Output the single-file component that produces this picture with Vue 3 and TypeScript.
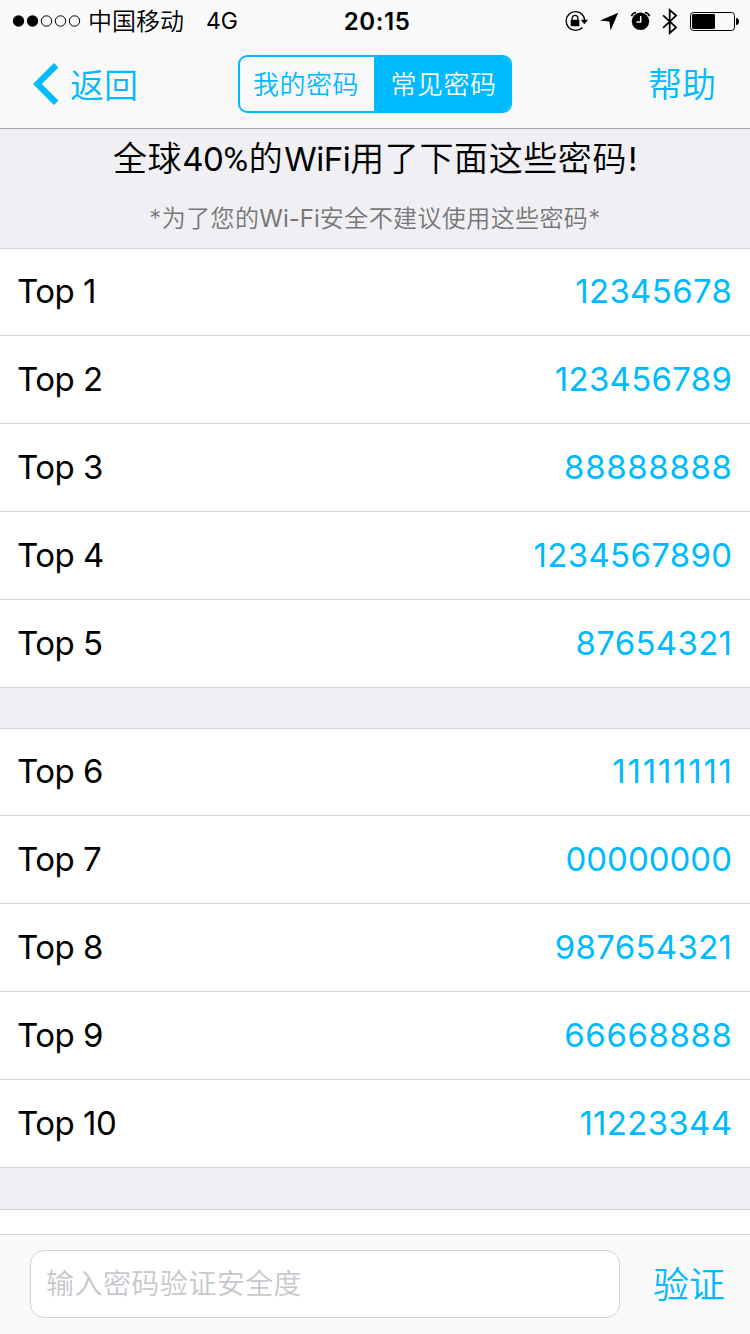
<script setup lang="ts">
import { ref } from 'vue'

interface Entry {
  rank: string
  password: string
  tracking: number
}

const groups: Entry[][] = [
  [
    { rank: 'Top 1', password: '12345678', tracking: 0.35 },
    { rank: 'Top 2', password: '123456789', tracking: 0.3 },
    { rank: 'Top 3', password: '88888888', tracking: 0.65 },
    { rank: 'Top 4', password: '1234567890', tracking: 0.3 },
    { rank: 'Top 5', password: '87654321', tracking: 0.3 },
  ],
  [
    { rank: 'Top 6', password: '11111111', tracking: 1.75 },
    { rank: 'Top 7', password: '00000000', tracking: 0 },
    { rank: 'Top 8', password: '987654321', tracking: 0.3 },
    { rank: 'Top 9', password: '66668888', tracking: 0.6 },
    { rank: 'Top 10', password: '11223344', tracking: 0.3 },
  ],
]

const tabs = ['我的密码', '常见密码']
const activeTab = ref(1)
const candidate = ref('')
</script>

<template>
  <div class="screen">
    <header class="top">
      <div class="status">
        <div class="status-left">
          <svg class="signal" width="70" height="14" viewBox="0 0 70 14">
            <circle cx="6.5" cy="7" r="5.7" />
            <circle cx="20.5" cy="7" r="5.7" />
            <g fill="none" stroke="#000" stroke-width="1">
              <circle cx="34.5" cy="7" r="5.2" />
              <circle cx="48.5" cy="7" r="5.2" />
              <circle cx="62.5" cy="7" r="5.2" />
            </g>
          </svg>
          <span class="carrier">中国移动</span>
          <span class="network">4G</span>
        </div>
        <span class="time">20:15</span>
        <svg class="indicators" width="180" height="32" viewBox="560 4 180 32">
          <path d="M582.4 13.6A9.4 9.4 0 1 0 582.4 26.4M582.2 13.4Q584.4 15.7 584.7 19" fill="none" stroke="#000" stroke-width="1.4" />
          <path d="M580.8 18.8h7.2l-3.6 4.4z" />
          <path d="M572.1 19v-1.7a2.9 2.9 0 0 1 5.8 0V19" fill="none" stroke="#000" stroke-width="1.3" />
          <rect x="570.7" y="18.8" width="8.6" height="6.4" rx=".6" />
          <path d="M618.2 11.8L610.6 29.6L609.4 20.6L600 19.6Z" />
          <circle cx="640.5" cy="20.3" r="8.7" />
          <path d="M640.7 15v5.9h-4.2" fill="none" stroke="#f9f9f9" stroke-width="1.5" />
          <path d="M631.4 15.3q.9-3.1 4.6-3.8M645 11.5q3.7.7 4.6 3.8" fill="none" stroke="#000" stroke-width="1.7" />
          <path d="M663.1 14.3L676.1 26.4L669.7 32V9L676.1 14.6L663.1 26.9" fill="none" stroke="#000" stroke-width="1.8" />
          <rect x="690.5" y="11.5" width="44" height="18" rx="3" fill="none" stroke="#000" />
          <rect x="692" y="13" width="23" height="15" rx="1.4" />
          <path d="M736 17q3 .3 3 3.5t-3 3.5z" />
        </svg>
      </div>
      <nav class="nav">
        <a class="back">
          <svg width="26" height="42" viewBox="0 0 26 42">
            <path d="M0 21L21 0L25.4 4.4L8.8 21L25.4 37.6L21 42Z" fill="#00baff" />
          </svg>
          <span>返回</span>
        </a>
        <div class="segment">
          <button
            v-for="(tab, i) in tabs"
            :key="tab"
            type="button"
            :class="{ active: i === activeTab }"
            @click="activeTab = i"
          >
            {{ tab }}
          </button>
        </div>
        <a class="help">帮助</a>
      </nav>
    </header>

    <main class="content">
      <section class="intro">
        <h1>全球<span class="latin">40<span class="percent">%</span></span>的<span class="latin wifi">WiFi</span>用了下面这些密码<span class="latin mark">!</span></h1>
        <p>*为了您的<span class="latin">Wi-Fi</span>安全不建议使用这些密码*</p>
      </section>
      <ul v-for="(group, g) in groups" :key="g" class="group">
        <li v-for="entry in group" :key="entry.rank">
          <span class="rank">{{ entry.rank }}</span>
          <span class="password" :style="{ '--tracking': entry.tracking + 'px' }">{{ entry.password }}</span>
        </li>
      </ul>
      <div class="next-group"></div>
    </main>

    <footer class="verify">
      <input v-model="candidate" type="text" placeholder="输入密码验证安全度" />
      <a class="submit">验证</a>
    </footer>
  </div>
</template>

<style>
body {
  margin: 0;
}
</style>

<style scoped>
.screen {
  display: flex;
  flex-direction: column;
  width: 750px;
  height: 1334px;
  overflow: hidden;
  background: #efeff4;
  color: #000;
  font-family: Inter, 'Noto Sans CJK SC', sans-serif;
}

.top {
  box-sizing: border-box;
  height: 129px;
  flex: none;
  background: #f9f9f9;
  border-bottom: 1px solid #a7a7ab;
}

.status {
  display: grid;
  grid-template-columns: 1fr auto 1fr;
  align-items: center;
  height: 40px;
  padding: 0 10px 0 12px;
}

.status-left {
  display: flex;
  align-items: center;
  font-size: 24px;
  line-height: 40px;
  white-space: nowrap;
}

.carrier {
  margin-left: 6px;
  padding-top: 2px;
  font-weight: 350;
}

.network {
  margin-left: 22px;
  font-size: 23px;
}

.time {
  padding: 1px 0 0 2px;
  font-size: 24px;
  line-height: 40px;
  font-weight: 600;
  letter-spacing: 0.6px;
}

.indicators {
  justify-self: end;
}

.nav {
  display: grid;
  grid-template-columns: 1fr 274px 1fr;
  align-items: center;
  height: 88px;
  padding: 0 34px 0 33px;
  color: #00baff;
  font-size: 34px;
  font-weight: 350;
}

.back {
  display: flex;
  align-items: center;
  gap: 11px;
}

.back span {
  padding-bottom: 2px;
}

.help {
  justify-self: end;
  padding-bottom: 4px;
}

.segment {
  display: grid;
  grid-template-columns: 134px 1fr;
  box-sizing: border-box;
  height: 58px;
  border: 2px solid #00baff;
  border-radius: 9px;
  overflow: hidden;
}

.segment button {
  padding: 0 1px 4px 0;
  border: 0;
  background: transparent;
  color: #00baff;
  font: inherit;
  font-size: 26px;
  letter-spacing: 0.5px;
}

.segment .active {
  padding: 0 0 4px 4px;
  background: #00baff;
  color: #f9f9f9;
}

.content {
  flex: 1;
  overflow: hidden;
}

.intro {
  height: 119px;
  text-align: center;
}

.intro h1 {
  margin: 0;
  padding-top: 5px;
  font-size: 34px;
  line-height: 50px;
  font-weight: 350;
  letter-spacing: 0.6px;
}

.intro h1 .latin {
  font-size: 33px;
  font-weight: 400;
  letter-spacing: -0.5px;
}

.intro h1 .percent {
  margin-right: 1px;
  font-family: Roboto, sans-serif;
  font-size: 34px;
}

.intro h1 .wifi {
  margin-left: 1px;
}

.intro h1 .mark {
  margin-left: 1px;
}

.intro p {
  margin: 0;
  padding-top: 15px;
  font-size: 24px;
  line-height: 40px;
  font-weight: 350;
  letter-spacing: 0.4px;
  color: #777;
}

.intro p .latin {
  font-weight: 400;
  letter-spacing: 0;
}

.group {
  margin: 0 0 40px;
  padding: 0;
  list-style: none;
  background: #fff;
  border-top: 1px solid #d3d3d6;
}

.group:nth-of-type(2) {
  margin-bottom: 41px;
}

.group li {
  display: flex;
  align-items: center;
  justify-content: space-between;
  box-sizing: border-box;
  height: 88px;
  padding: 0 18px 1px 17px;
  border-bottom: 1px solid #d3d3d6;
  font-size: 33px;
}

.group li:first-child {
  height: 87px;
  padding-bottom: 2px;
}

.rank {
  letter-spacing: -0.5px;
}

.password {
  margin-right: calc(-1 * var(--tracking));
  letter-spacing: var(--tracking);
  color: #00baff;
}

.next-group {
  height: 30px;
  background: #fff;
  border-top: 1px solid #d3d3d6;
}

.verify {
  display: flex;
  flex: none;
  align-items: center;
  justify-content: space-between;
  box-sizing: border-box;
  height: 100px;
  padding: 0 25px 2px 30px;
  background: #f9f9f9;
  border-top: 1px solid #d3d3d6;
}

.verify input {
  box-sizing: border-box;
  width: 590px;
  height: 68px;
  padding: 0 15px;
  border: 1px solid #d3d3d6;
  border-radius: 14px;
  outline: none;
  background: #fff;
  font: inherit;
  font-size: 28px;
  font-weight: 350;
  letter-spacing: 0.45px;
}

.verify input::placeholder {
  color: #c7c7cd;
  opacity: 1;
}

.submit {
  padding-bottom: 4px;
  color: #00baff;
  font-size: 36px;
  font-weight: 350;
}
</style>
